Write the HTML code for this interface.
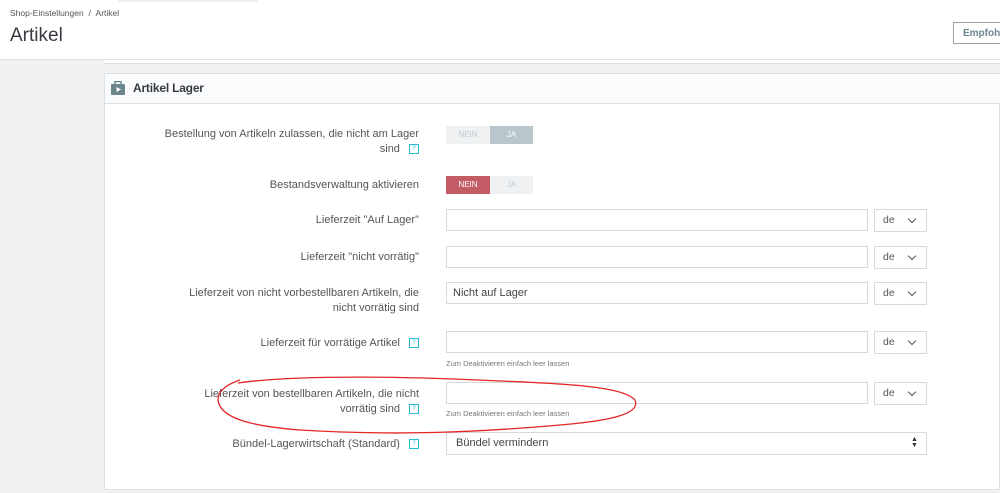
<!DOCTYPE html>
<html><head><meta charset="utf-8"><style>
body{margin:0;width:1000px;height:493px;overflow:hidden;background:#eff1f2;font-family:"Liberation Sans",sans-serif;position:relative;color:#555}
.a{position:absolute}
.hdr{left:0;top:0;width:1000px;height:59px;background:#fff;border-bottom:1px solid #dde1e3}
.lbl{font-size:11px;color:#555;text-align:right;line-height:15px}
.inp{background:#fff;border:1px solid #d5dadd;height:22px;box-sizing:border-box;font-size:11px;color:#444;padding:4px 6px}
.lang{border:1px solid #d5dadd;background:#fff;width:53px;height:23px;box-sizing:border-box;font-size:10.5px;padding:4px 8px;color:#555}
.lang:after{content:"";position:absolute;right:11px;top:6px;width:5px;height:5px;border-right:1.5px solid #555;border-bottom:1.5px solid #555;transform:rotate(45deg)}
.q{display:inline-block;width:8px;height:8px;border:1px solid #25b9d7;font-size:6px;line-height:8px;text-align:center;color:#25b9d7;margin-left:6px;vertical-align:middle}
.hint{font-size:7.5px;color:#777}
.tg{font-size:8px;text-align:center;line-height:18px;height:18px}
</style></head><body>
<div class="a hdr"></div>
<div class="a" style="left:118px;top:0;width:140px;height:2px;background:#eef0f1"></div>
<div class="a" style="left:10px;top:8px;font-size:8.5px;color:#555">Shop-Einstellungen &nbsp;/ &nbsp;Artikel</div>
<div class="a" style="left:10px;top:25px;font-size:19px;color:#363a41">Artikel</div>
<div class="a" style="left:953px;top:22px;width:60px;height:22px;border:1px solid #9aa5ad;box-sizing:border-box;background:#fff;font-size:10px;color:#6c868e;padding:5px 9px;font-weight:bold">Empfohlen</div>
<div class="a" style="left:104px;top:60px;width:896px;height:3px;background:#fff;border-bottom:1px solid #dde1e3"></div>
<div class="a" style="left:104px;top:73px;width:896px;height:417px;background:#fff;border:1px solid #dde1e3;box-sizing:border-box"></div>
<div class="a" style="left:105px;top:74px;width:895px;height:29px;background:#fafbfc;border-bottom:1px solid #dde1e3"></div>
<svg class="a" style="left:111px;top:81px" width="14" height="14" viewBox="0 0 14 14"><rect x="0" y="3" width="14" height="11" rx="1" fill="#6c868e"/><rect x="4" y="0.5" width="6" height="3.5" fill="none" stroke="#6c868e" stroke-width="1.5"/><path d="M5.5 6 L10 8.5 L5.5 11Z" fill="#fff"/></svg>
<div class="a" style="left:133px;top:81px;font-size:12px;color:#363a41;font-weight:bold;letter-spacing:-0.2px">Artikel Lager</div>

<div class="a lbl" style="right:581px;top:127px;width:300px">Bestellung von Artikeln zulassen, die nicht am Lager<br>sind <span class="q">?</span></div>
<div class="a tg" style="left:446px;top:126px;width:44px;background:#eff1f2;color:#bbcdd2">NEIN</div>
<div class="a tg" style="left:490px;top:126px;width:43px;background:#b9c7cc;color:#fff">JA</div>

<div class="a lbl" style="right:581px;top:178px;width:300px">Bestandsverwaltung aktivieren</div>
<div class="a tg" style="left:446px;top:176px;width:44px;background:#c45c66;color:#fff">NEIN</div>
<div class="a tg" style="left:490px;top:176px;width:43px;background:#eff1f2;color:#bbcdd2">JA</div>

<div class="a lbl" style="right:581px;top:213px;width:300px">Lieferzeit "Auf Lager"</div>
<div class="a inp" style="left:446px;top:209px;width:422px"></div>
<div class="a lang" style="left:874px;top:209px">de</div>

<div class="a lbl" style="right:581px;top:250px;width:300px">Lieferzeit "nicht vorrätig"</div>
<div class="a inp" style="left:446px;top:246px;width:422px"></div>
<div class="a lang" style="left:874px;top:246px">de</div>

<div class="a lbl" style="right:581px;top:286px;width:300px">Lieferzeit von nicht vorbestellbaren Artikeln, die<br>nicht vorrätig sind</div>
<div class="a inp" style="left:446px;top:282px;width:422px">Nicht auf Lager</div>
<div class="a lang" style="left:874px;top:282px">de</div>

<div class="a lbl" style="right:581px;top:336px;width:300px">Lieferzeit für vorrätige Artikel <span class="q">?</span></div>
<div class="a inp" style="left:446px;top:331px;width:422px"></div>
<div class="a lang" style="left:874px;top:331px">de</div>
<div class="a hint" style="left:446px;top:359px">Zum Deaktivieren einfach leer lassen</div>

<div class="a lbl" style="right:581px;top:387px;width:300px">Lieferzeit von bestellbaren Artikeln, die nicht<br>vorrätig sind <span class="q">?</span></div>
<div class="a inp" style="left:446px;top:382px;width:422px"></div>
<div class="a lang" style="left:874px;top:382px">de</div>
<div class="a hint" style="left:446px;top:409px">Zum Deaktivieren einfach leer lassen</div>

<div class="a lbl" style="right:581px;top:437px;width:300px">Bündel-Lagerwirtschaft (Standard) <span class="q">?</span></div>
<div class="a inp" style="left:446px;top:432px;width:481px;height:23px;padding-left:9px">Bündel vermindern</div>
<div class="a" style="left:911px;top:437px;font-size:7px;line-height:6px;color:#333">▲<br>▼</div>

<svg class="a" style="left:0;top:0" width="1000" height="493"><path d="M238 383 C300 374 420 377 500 381 C580 384 625 388 635 400 C640 412 620 420 560 425 C480 432 400 436 300 430 C250 426 220 418 218 400 C218 390 228 384 240 380" fill="none" stroke="#e32626" stroke-width="1.3"/></svg>
</body></html>
